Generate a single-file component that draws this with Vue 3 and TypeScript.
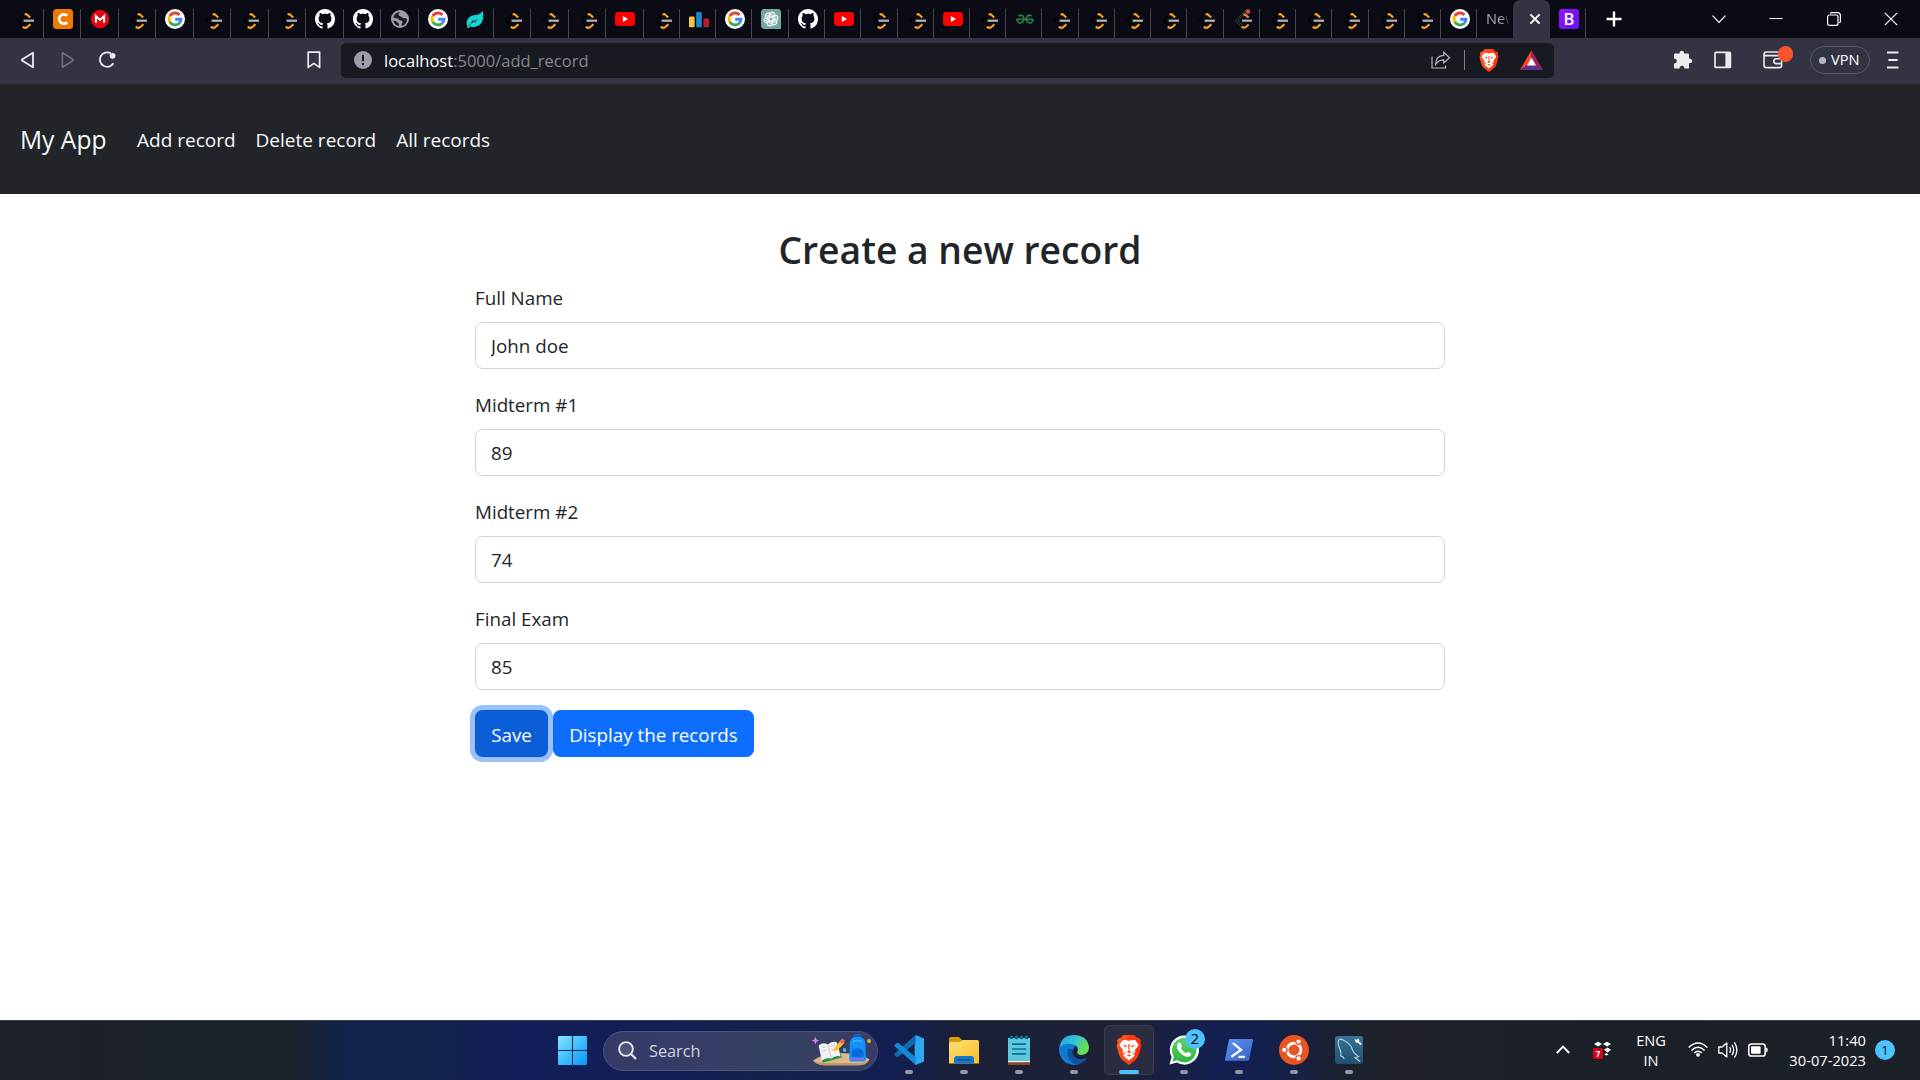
<script setup lang="ts">
import { ref } from 'vue'

interface Tab {
  icon: string
  width: number
}

interface Field {
  id: string
  label: string
  value: string
}

interface TaskApp {
  icon: string
  active?: boolean
  badge?: string
}

const tabIcons: string[] = [
  'lc', 'coursera', 'mega', 'lc', 'google', 'lc', 'lc', 'lc', 'github', 'github', 'globe', 'google', 'leaf',
  'lc', 'lc', 'lc', 'youtube', 'lc', 'bars', 'google', 'gpt', 'github', 'youtube', 'lc', 'lc', 'youtube',
  'lc', 'gfg', 'lc', 'lc', 'lc', 'lc', 'lc', 'lc-dot', 'lc', 'lc', 'lc', 'lc', 'lc', 'google',
]
const tabEdges: number[] = [
  6, 44, 81, 119, 156, 194, 231, 269, 306, 344, 381, 419, 456, 494, 531, 569, 606, 644, 680, 716, 752, 789,
  825, 861, 898, 934, 970, 1006, 1042, 1079, 1115, 1151, 1187, 1224, 1260, 1296, 1332, 1369, 1405, 1441, 1477,
]
const tabs: Tab[] = tabIcons.map((icon, i) => ({ icon, width: tabEdges[i + 1] - tabEdges[i] }))

const navLinks: string[] = ['Add record', 'Delete record', 'All records']

const fields = ref<Field[]>([
  { id: 'name', label: 'Full Name', value: 'John doe' },
  { id: 'mid1', label: 'Midterm #1', value: '89' },
  { id: 'mid2', label: 'Midterm #2', value: '74' },
  { id: 'final', label: 'Final Exam', value: '85' },
])

const apps: TaskApp[] = [
  { icon: 'vscode' },
  { icon: 'folder' },
  { icon: 'notepad' },
  { icon: 'edge' },
  { icon: 'brave', active: true },
  { icon: 'whatsapp', badge: '2' },
  { icon: 'powershell' },
  { icon: 'ubuntu' },
  { icon: 'mysql' },
]
</script>

<template>
  <svg class="defs" width="0" height="0" aria-hidden="true">
    <defs>
      <linearGradient id="g-win" x1="0" y1="0" x2="1" y2="1">
        <stop offset="0" stop-color="#8ae3ff" /><stop offset=".5" stop-color="#3cc0fb" /><stop offset="1" stop-color="#0a95f5" />
      </linearGradient>
      <linearGradient id="g-folder" x1="0" y1="0" x2="1" y2="1">
        <stop offset="0" stop-color="#ffe07a" /><stop offset="1" stop-color="#f8bd25" />
      </linearGradient>
      <linearGradient id="g-edge" x1="0" y1="0" x2="1" y2=".4">
        <stop offset="0" stop-color="#1b9de2" /><stop offset=".55" stop-color="#35c3d8" /><stop offset="1" stop-color="#6be04f" />
      </linearGradient>
      <linearGradient id="g-brave" x1="0" y1="0" x2="1" y2="0">
        <stop offset="0" stop-color="#ff5a1f" /><stop offset="1" stop-color="#ff2a0a" />
      </linearGradient>
      <linearGradient id="g-ps" x1="0" y1="0" x2="1" y2="1">
        <stop offset="0" stop-color="#5a94f5" /><stop offset="1" stop-color="#3a62c4" />
      </linearGradient>
      <linearGradient id="g-wa" x1="0" y1="0" x2="0" y2="1">
        <stop offset="0" stop-color="#5fd267" /><stop offset="1" stop-color="#2bb741" />
      </linearGradient>
      <linearGradient id="g-mysql" x1="0" y1="0" x2="0" y2="1">
        <stop offset="0" stop-color="#37729a" /><stop offset="1" stop-color="#20506e" />
      </linearGradient>
    </defs>

    <symbol id="i-lc" viewBox="0 0 20 20">
      <path d="M11.5 4 L4.6 10.2 Q3.3 11.6 4.6 13 L8.6 17" fill="none" stroke="#040405" stroke-width="1.9" />
      <path d="M9.6 5.7 L11.4 5 L15.2 8.5" fill="none" stroke="#f9a11b" stroke-width="2.2" stroke-linejoin="round" />
      <path d="M7.8 17.6 Q10 19.7 12.2 18.2 L15.4 15.2" fill="none" stroke="#f9a11b" stroke-width="2.2" />
      <path d="M8.6 11.7 H19" stroke="#b8b4b6" stroke-width="2.2" />
    </symbol>
    <symbol id="i-lc-dot" viewBox="0 0 20 20">
      <path d="M13 1 L3.6 10.2 Q2.3 11.8 3.6 13.3 L8.6 18.3" fill="none" stroke="#55524f" stroke-width=".7" />
      <path d="M12 4.4 L5.8 10.8 Q5.2 11.9 6 13 L8.8 16" fill="none" stroke="#55524f" stroke-width=".7" />
      <path d="M10.4 6 L12 5.4 L15.6 8.6" fill="none" stroke="#d99a35" stroke-width="2.1" />
      <path d="M8.6 17.6 Q11 19.3 12.8 18.2 L15.6 15.5" fill="none" stroke="#d99a35" stroke-width="2.1" />
      <path d="M9 11.7 H19" stroke="#b8b4b6" stroke-width="2.1" />
      <circle cx="15" cy="2.6" r="2.4" fill="#e04848" />
    </symbol>
    <symbol id="i-coursera" viewBox="0 0 20 20">
      <rect width="20" height="20" rx="3.5" fill="#ef7a00" />
      <path d="M14.2 6.8 A4.7 4.7 0 1 0 14.2 13.2" fill="none" stroke="#fff" stroke-width="2.8" />
    </symbol>
    <symbol id="i-mega" viewBox="0 0 20 20">
      <circle cx="10" cy="10" r="9.2" fill="#e30613" />
      <path d="M5.9 13.7 V7 L10 10.9 L14.1 7 V13.7" fill="none" stroke="#fff" stroke-width="2" />
    </symbol>
    <symbol id="i-google" viewBox="0 0 20 20">
      <circle cx="10" cy="10" r="10" fill="#fff" />
      <g fill="none" stroke-width="2.9">
        <path d="M4.8 7 A6 6 0 0 1 14.4 5.9" stroke="#ea4335" />
        <path d="M4.9 13.1 A6 6 0 0 1 4.9 6.9" stroke="#fbbc05" />
        <path d="M14.2 14.3 A6 6 0 0 1 4.8 12.9" stroke="#34a853" />
        <path d="M10.2 10.2 H16 A6 6 0 0 1 14 14.4" stroke="#4285f4" />
      </g>
    </symbol>
    <symbol id="i-github" viewBox="0 0 16 16">
      <path fill="#fff" d="M8 0C3.58 0 0 3.58 0 8c0 3.54 2.29 6.53 5.47 7.59.4.07.55-.17.55-.38 0-.19-.01-.82-.01-1.49-2.01.37-2.53-.49-2.69-.94-.09-.23-.48-.94-.82-1.13-.28-.15-.68-.52-.01-.53.63-.01 1.08.58 1.23.82.72 1.21 1.87.87 2.33.66.07-.52.28-.87.51-1.07-1.78-.2-3.64-.89-3.64-3.95 0-.87.31-1.59.82-2.15-.08-.2-.36-1.02.08-2.12 0 0 .67-.21 2.2.82.64-.18 1.32-.27 2-.27s1.36.09 2 .27c1.53-1.04 2.2-.82 2.2-.82.44 1.1.16 1.92.08 2.12.51.56.82 1.27.82 2.15 0 3.07-1.87 3.75-3.65 3.95.29.25.54.73.54 1.48 0 1.07-.01 1.93-.01 2.2 0 .21.15.46.55.38A8.01 8.01 0 0 0 16 8c0-4.42-3.58-8-8-8z" />
    </symbol>
    <symbol id="i-globe" viewBox="0 0 20 20">
      <circle cx="10" cy="10" r="9" fill="#9aa0a6" />
      <path d="M10.2 3 Q7.8 4.6 8.6 6.6 Q9.6 7.6 11.4 7.4 Q12.4 9.6 14.6 9 Q17 9 17 10.6 Q16.6 15.6 12 17 Q11 15.4 12.4 13.8 Q13 11.6 10.6 11.6 Q8.6 11.2 8 9.4 Q5.4 9.6 3.2 8.6 Q4.8 3.4 10.2 3Z M3.2 11.4 Q6.6 11.2 7.2 13.2 Q9.4 13.6 9 17 Q4.4 16.2 3.2 11.4Z" fill="#1c1c27" />
    </symbol>
    <symbol id="i-leaf" viewBox="0 0 20 20">
      <path d="M18 1.8 Q19.2 11 15.6 15 Q11.6 19.4 5.6 17.4 L3 19.2 Q1.6 18.6 2.2 17.6 Q.6 12.4 3.6 8.8 Q6 6.2 11 6 Q15 5.6 18 1.8Z" fill="#15d3d0" />
      <path d="M3.4 17 Q6.4 12.6 12.4 10.6 M7 13.4 L7.6 11 M8.6 12.6 L11 13.2" fill="none" stroke="#0b3a42" stroke-width=".9" />
    </symbol>
    <symbol id="i-youtube" viewBox="0 0 20 20">
      <rect y="3" width="20" height="14" rx="3.4" fill="#f00" />
      <path d="M7.9 7 L13.1 10 L7.9 13Z" fill="#fff" />
    </symbol>
    <symbol id="i-bars" viewBox="0 0 20 20">
      <rect x="0" y="7.6" width="5.6" height="10.6" rx="1" fill="#f3c63f" />
      <rect x="7.2" y="3" width="5.6" height="15.2" rx="1" fill="#1c87c9" />
      <rect x="14.4" y="9.4" width="5.6" height="8.8" rx="1" fill="#b71d29" />
    </symbol>
    <symbol id="i-gpt" viewBox="0 0 20 20">
      <path d="M3.4 0 H16.6 Q20 0 20 3.4 V20 H3.4 Q0 20 0 16.6 V3.4 Q0 0 3.4 0Z" fill="#74a99b" />
      <g fill="none" stroke="#fff" stroke-width="1.1" stroke-linejoin="round">
        <path id="petal" d="M10 8 L13 6.3 Q15.6 5.6 16.7 7.8 Q17.4 9.8 15.8 11.2 M12 8.9 V13.2 L8.4 15.4" />
        <use href="#petal" transform="rotate(60 10 10)" />
        <use href="#petal" transform="rotate(120 10 10)" />
        <use href="#petal" transform="rotate(180 10 10)" />
        <use href="#petal" transform="rotate(240 10 10)" />
        <use href="#petal" transform="rotate(300 10 10)" />
      </g>
    </symbol>
    <symbol id="i-gfg" viewBox="0 0 20 20">
      <path d="M3.4 7.2 Q5.8 5.2 8 7.4 Q9.6 9.8 8 12.6 Q5.6 14.8 3.2 13.2 Q1.9 11.9 2 10.4 H18 Q18.1 11.9 16.8 13.2 Q14.4 14.8 12 12.6 Q10.4 9.8 12 7.4 Q14.2 5.2 16.6 7.2" fill="none" stroke="#2a7a3f" stroke-width="1.7" />
    </symbol>
    <symbol id="i-brave" viewBox="0 0 26 30">
      <path d="M7.5 0 H18.5 L21 2.8 Q24 2.6 25 5.6 L24.4 7.6 L25.4 10.2 Q23.4 19 21.6 22.6 Q20.4 24.8 13 30 Q5.6 24.8 4.4 22.6 Q2.6 19 .6 10.2 L1.6 7.6 L1 5.6 Q2 2.6 5 2.8Z" fill="url(#g-brave)" />
      <path d="M9.6 5 L13 5.8 L16.4 5 L19.4 5.2 L22.4 9.6 Q22.6 11.4 19 14.8 Q20.2 17.6 17 19 L19 20.4 L13 25.4 L7 20.4 L9 19 Q5.8 17.6 7 14.8 Q3.4 11.4 3.6 9.6 L6.6 5.2Z" fill="#fff" />
      <path d="M6.8 9.8 L11 10.8 L10 12.6Z M19.2 9.8 L15 10.8 L16 12.6Z M12.2 9.6 L13 9 L13.8 9.6 L13.4 15.4 L15 17 L13 18.2 L11 17 L12.6 15.4Z M8.6 15.8 L10.2 18 L8.6 17.4Z M17.4 15.8 L15.8 18 L17.4 17.4Z M10.6 20.4 L13 19.5 L15.4 20.4 L13 21.6Z" fill="#ff4416" />
    </symbol>
    <symbol id="i-vscode" viewBox="0 0 30 30">
      <path d="M21.6 0 L30 3.6 V26.4 L21.6 30 L20.6 28 V2Z" fill="#2aa9ee" />
      <path d="M.5 18.6 L21.6 0 V7.8 L4.6 21.8 L2.9 22 L.5 19.9Z" fill="#0b6cb5" />
      <path d="M.5 10 L3 7.9 L4.6 8.1 L21.6 22.2 V30 L.5 11.2Z" fill="#1589d6" />
    </symbol>
    <symbol id="i-folder" viewBox="0 0 30 30">
      <path d="M0 4 Q0 2 2 2 H10 L13 5 H28 V12 H0Z" fill="#dc9a0b" />
      <path d="M0 9 Q0 7 2 7 H11 L14 5 H28.5 Q30 5 30 6.5 V28.5 H0Z" fill="url(#g-folder)" />
      <path d="M5 28.5 V24 Q5 21 8 21 H22 Q25 21 25 24 V28.5Z" fill="#1379cc" />
      <path d="M8.5 24.8 H21.5" stroke="#0a4a86" stroke-width="1.3" />
    </symbol>
    <symbol id="i-notepad" viewBox="0 0 30 30">
      <rect x="4" y="3" width="22" height="24" fill="#5ec6dd" />
      <path d="M4 26 H26 V27.6 H4Z" fill="#f2f2f2" />
      <path d="M4 27.4 H26 V30 H4Z" fill="#8b4b20" />
      <path d="M8 9.2 H22 M8 14 H22 M8 18.8 H22" stroke="#087097" stroke-width="1.7" />
      <g fill="#0c6d90">
        <circle cx="7.5" cy="2.4" r="1.9" /><circle cx="12.5" cy="2.4" r="1.9" /><circle cx="17.5" cy="2.4" r="1.9" /><circle cx="22.5" cy="2.4" r="1.9" />
      </g>
    </symbol>
    <symbol id="i-edge" viewBox="0 0 30 30">
      <path d="M0 15 A15 15 0 0 0 25.6 25.6 Q15 29 12 19 L17 9 Q8 4 0 13Z" fill="#0c7cd5" />
      <path d="M8.8 13.5 Q6.5 26 17.6 29.7 Q24.5 28.8 28.2 22.6 Q20.5 26 15.4 21.8 Q12 17.6 14.6 14.4Z" fill="#11529e" />
      <path d="M.3 13 Q2 0 15 0 Q28.6 .4 30 12.6 Q29.6 20 22 20 Q16.6 19.6 18.8 15.6 Q19.4 10.6 13 9 Q5 7.6 .3 13Z" fill="url(#g-edge)" />
    </symbol>
    <symbol id="i-whatsapp" viewBox="0 0 30 30">
      <path d="M.5 29.5 L2.6 22 A14.6 14.6 0 1 1 8 27.6Z" fill="#fff" />
      <path d="M3.6 26.4 L4.9 21.6 A12.2 12.2 0 1 1 8.4 25.2Z" fill="url(#g-wa)" />
      <path d="M9.4 7.8 Q11 6.8 11.8 8.4 L13 11 Q13.2 12 11.8 13.2 Q13.4 16.6 17 18.2 Q18.4 16.6 19.2 16.8 L22.2 18.4 Q22.8 20.4 20.4 21.6 Q17.6 22.8 13 19.4 Q8.4 15.6 7.8 11.6 Q7.8 9 9.4 7.8Z" fill="#fff" />
    </symbol>
    <symbol id="i-powershell" viewBox="0 0 30 30">
      <path d="M6 4 H28 Q29.2 4 29 5.2 L25.2 24.6 Q25 25.8 23.6 25.8 H2 Q.8 25.8 1 24.6 L4.8 5.2 Q5 4 6 4Z" fill="url(#g-ps)" />
      <path d="M9 8 L17 15 L7.4 21.8 M14.4 21.8 H21" fill="none" stroke="#fff" stroke-width="2.3" />
    </symbol>
    <symbol id="i-ubuntu" viewBox="0 0 30 30">
      <circle cx="15" cy="15" r="15" fill="#e95420" />
      <circle cx="15" cy="15" r="6.9" fill="none" stroke="#fff" stroke-width="2.9" />
      <g stroke="#e95420" stroke-width="1.3" fill="#fff">
        <circle cx="5.4" cy="15" r="2.8" /><circle cx="19.6" cy="6.6" r="2.8" /><circle cx="19.6" cy="23.4" r="2.8" />
      </g>
    </symbol>
    <symbol id="i-mysql" viewBox="0 0 30 30">
      <rect x="1" y="1" width="28" height="28" rx="2.5" fill="url(#g-mysql)" />
      <path d="M6.4 21 Q7.6 19 6.2 15 Q3.4 8.6 4.6 5.4 Q5.6 3 9.2 5 Q14.8 7.4 17.6 12.6 Q19 18 24.6 21.6 L20.8 22.8 Q24 24.8 26 26.6 M6.4 21 Q9 20.6 10.2 24" fill="none" stroke="#bcd3df" stroke-width="1.1" />
      <path d="M20.6 3.4 L22.4 5 L24.2 3.2 Q26 5.4 25.2 6.4 L28 9 L26.6 10.2 L23.8 7.8 Q21 8 20.6 3.4Z" fill="#f2f6f8" />
    </symbol>
  </svg>

  <div class="desktop">
    <!-- Browser tab strip -->
    <div class="tabstrip">
      <div v-for="(tab, i) in tabs" :key="i" class="tab" :style="{ width: tab.width + 'px' }">
        <svg class="favicon"><use :href="'#i-' + tab.icon" /></svg>
      </div>
      <div class="tab-new"><span>New</span></div>
      <div class="tab-active">
        <svg width="12" height="12" viewBox="0 0 12 12"><path d="M1.4 1.4 L10.6 10.6 M10.6 1.4 L1.4 10.6" stroke="#fff" stroke-width="2" /></svg>
      </div>
      <div class="tab tab-last"><span class="boot">B</span></div>
      <svg class="plus" width="16" height="16" viewBox="0 0 16 16"><path d="M8 .5 V15.5 M.5 8 H15.5" stroke="#fff" stroke-width="2.4" /></svg>
      <div class="window-buttons">
        <svg width="14" height="14" viewBox="0 0 14 14"><path d="M.6 3.6 L7 10.4 L13.4 3.6" /></svg>
        <svg width="14" height="14" viewBox="0 0 14 14"><path d="M.5 6.5 H13.5" stroke-width="1.1" /></svg>
        <svg width="14" height="14" viewBox="0 0 14 14"><rect x=".6" y="3" width="10.4" height="10.4" rx="2" /><path d="M3.2 1.6 Q3.8 .6 5 .6 H10.4 Q13.4 .6 13.4 3.6 V9 Q13.4 10.4 12.4 11" /></svg>
        <svg width="14" height="14" viewBox="0 0 14 14"><path d="M.8 .8 L13.2 13.2 M13.2 .8 L.8 13.2" /></svg>
      </div>
    </div>

    <!-- Address toolbar -->
    <div class="toolbar">
      <svg class="back" width="14" height="18" viewBox="0 0 14 18"><path d="M12 1.8 V16.2 L1.4 9.8 Q.6 9 1.4 8.2Z" fill="none" stroke="#ececf0" stroke-width="1.8" stroke-linejoin="round" /></svg>
      <svg class="forward" width="14" height="18" viewBox="0 0 14 18"><path d="M1.4 1.8 V16.2 L11.8 9.8 Q12.6 9 11.8 8.2Z" fill="none" stroke="#6d6f7c" stroke-width="1.6" stroke-linejoin="round" /></svg>
      <svg class="reload" width="18" height="18" viewBox="0 0 18 18"><path d="M12.8 2.4 A7.2 7.2 0 1 0 15.4 12.2" fill="none" stroke="#ececf0" stroke-width="1.8" /><circle cx="14.6" cy="4.8" r="2.9" fill="#ececf0" /></svg>
      <svg class="bookmark" width="14" height="18" viewBox="0 0 14 18"><path d="M1.2 1.2 H12.6 V16.4 L6.9 12.4 L1.2 16.4Z" fill="none" stroke="#ececf0" stroke-width="1.7" stroke-linejoin="round" /></svg>
      <div class="address">
        <svg width="18" height="18" viewBox="0 0 18 18"><circle cx="9" cy="9" r="9" fill="#9a9da8" /><path d="M9 3.8 V10.2 M9 12 V14.2" stroke="#17191f" stroke-width="2" /></svg>
        <span class="url"><b>localhost</b>:5000/add_record</span>
        <svg class="share" width="20" height="18" viewBox="0 0 20 18"><path d="M1 5.6 V17 H14.6 V14.4 M4.6 13.4 Q4.8 4.8 12.8 4.4 V1.2 L18.6 6.8 L12.8 12 V8.8 Q7.4 8.8 4.6 13.4Z" fill="none" stroke="#b3b4b8" stroke-width="1.2" /></svg>
        <i class="divider"></i>
        <svg class="brave" width="20" height="23"><use href="#i-brave" /></svg>
        <svg class="bat" width="23" height="20" viewBox="0 0 23 20"><path d="M11.5 0 L0 20 L7.4 15 L11.5 8Z" fill="#ff4724" /><path d="M11.5 0 L23 20 L15.6 15 L11.5 8Z" fill="#9e1f63" /><path d="M0 20 H23 L15.6 15 H7.4Z" fill="#662d91" /><path d="M11.5 7.6 L7 15.4 H16Z" fill="#fff" /></svg>
      </div>
      <svg class="puzzle" width="20" height="20" viewBox="0 0 20 20"><path d="M6.6 3.4 Q6.6 .8 9 .8 Q11.2 .8 11.2 3.4 H14.8 Q16 3.4 16 4.6 V8.4 Q19.2 8.6 19.2 11 Q19.2 13.2 16 13.2 V17.4 Q16 18.6 14.8 18.6 H11.4 Q11.4 15.8 9 15.8 Q6.6 15.8 6.6 18.6 H2.2 Q1 18.6 1 17.4 V13.4 Q3.8 13.2 3.8 11 Q3.8 8.8 1 8.6 V4.6 Q1 3.4 2.2 3.4Z" fill="#ececec" /></svg>
      <svg class="sidebar" width="18" height="18" viewBox="0 0 18 18"><rect x="1" y="1.4" width="15.4" height="15" rx="1" fill="none" stroke="#ececec" stroke-width="1.7" /><path d="M11.4 1.4 H16.4 V16.4 H11.4Z" fill="#ececec" /></svg>
      <div class="wallet">
        <svg width="21" height="20" viewBox="0 0 21 20"><g fill="none" stroke="#ececec" stroke-width="1.6"><rect x="1" y="2" width="17.6" height="15.6" rx="2.4" /><path d="M1 5.6 H18.6 M19 8.8 H13.4 Q10.8 9 10.8 11.2 Q10.8 13.4 13.4 13.6 H19" /></g></svg>
        <i></i>
      </div>
      <div class="vpn"><i></i><span>VPN</span></div>
      <svg class="menu" width="12" height="18" viewBox="0 0 12 18"><path d="M0 1.5 H11.4 M1.4 9 H10.6 M0 16.5 H11.4" stroke="#ececec" stroke-width="1.9" /></svg>
    </div>

    <!-- Site navigation -->
    <nav class="navbar">
      <a class="brand">My App</a>
      <a v-for="link in navLinks" :key="link" class="nav-link">{{ link }}</a>
    </nav>

    <!-- Record form -->
    <main class="page">
      <form class="form" @submit.prevent>
        <h1>Create a new record</h1>
        <div v-for="field in fields" :key="field.id" class="field">
          <label :for="field.id">{{ field.label }}</label>
          <input :id="field.id" v-model="field.value" type="text" autocomplete="off" spellcheck="false" />
        </div>
        <div class="actions">
          <button type="submit" class="btn save">Save</button>
          <button type="button" class="btn display">Display the records</button>
        </div>
      </form>
    </main>

    <!-- Taskbar -->
    <footer class="taskbar">
      <svg class="start" width="29" height="29" viewBox="0 0 29 29"><path d="M1 0 H14 V14 H0 V1 Q0 0 1 0Z M15 0 H28 Q29 0 29 1 V14 H15Z M0 15 H14 V29 H1 Q0 29 0 28Z M15 15 H29 V28 Q29 29 28 29 H15Z" fill="url(#g-win)" /></svg>
      <div class="search">
        <svg width="19" height="19" viewBox="0 0 19 19"><circle cx="8" cy="8" r="6.9" fill="#4c5479" stroke="#e6e8ef" stroke-width="1.9" /><path d="M12.8 12.8 L18 18" stroke="#e6e8ef" stroke-width="2.2" /></svg>
        <span>Search</span>
        <svg class="highlight" width="60" height="34" viewBox="0 0 60 34">
          <path d="M1 26.5 Q12 18.6 28 19 Q48 19 57.6 25.4 Q54 32 44 31.2 H12 Q4 30.6 1 26.5Z" fill="#dfb98a" />
          <path d="M1 26.5 Q6 29 14 29 H45 Q54 29 57.6 25.4 Q54 32 44 31.2 H12 Q4 30.6 1 26.5Z" fill="#c49967" />
          <path d="M8 12 L25 9.6 L30 23.6 L10.6 28.8Z" fill="#29924d" />
          <path d="M6.6 11.4 Q11 7.6 15.8 10.4 Q20 6.6 25 8.4 L28.6 22.4 Q23 21 19.4 24.6 Q15 22.6 9.8 26.6Z" fill="#f3f0f2" />
          <path d="M15.8 10.4 L19.4 24.4 M9.4 13.6 L14 12.8 M10.4 17 L15 16.2 M18.6 12.6 L23.4 11 M19.6 16 L24.2 14.6" stroke="#cbc2cd" stroke-width=".8" />
          <path d="M22 14.8 L29 6 L32.6 8.8 L25.4 16.4 L21.6 17.4Z" fill="#ffbd36" />
          <path d="M27.4 7.6 L30.4 4.6 L33 6.8 L30.6 10.2Z" fill="#ef6359" />
          <path d="M3.4 2.6 L4.5 5.4 L7.4 6.5 L4.5 7.7 L3.4 10.4 L2.3 7.7 L-.4 6.5 L2.3 5.4Z" fill="#d77bf0" />
          <path d="M37.8 10 Q38 2.8 45.4 2.6 Q53.2 2.8 53.4 10 L54 24.6 Q54 27.6 50.8 27.6 H40.6 Q37 27.6 37.2 24.4Z" fill="#1391f8" />
          <path d="M42 3 Q42 .4 45.4 .4 Q49 .4 49 3" fill="none" stroke="#0869ce" stroke-width="1.5" />
          <path d="M39.6 23 V19 Q40 14.8 45.6 14.6 Q51.4 14.8 51.6 19 V23Z" fill="#0b68df" /><path d="M39.4 25 H51.8" stroke="#9b65ef" stroke-width="1.8" />
          <path d="M41 7.8 Q45 5.2 50 7.8" fill="none" stroke="#48b0ff" stroke-width="1.3" />
          <circle cx="32.6" cy="16" r="1.9" fill="#4ab9d7" /><circle cx="57" cy="7" r="1.9" fill="#f2b01e" />
        </svg>
      </div>
      <div class="apps">
        <div v-for="app in apps" :key="app.icon" class="app" :class="{ active: app.active }">
          <svg width="30" height="30"><use :href="'#i-' + app.icon" /></svg>
          <span v-if="app.badge" class="app-badge">{{ app.badge }}</span>
          <i></i>
        </div>
      </div>
      <div class="tray">
        <svg class="chev" width="14" height="9" viewBox="0 0 14 9"><path d="M.8 8 L7 1.6 L13.2 8" fill="none" stroke="#fff" stroke-width="1.9" /></svg>
        <div class="dropbox">
          <svg width="18" height="16" viewBox="0 0 18 16"><path d="M1 3 L5 .8 L9 3 L5 5.4Z M10 3 L14 .8 L18 3 L14 5.4Z M11 8.8 L14.6 6.4 L18 8.8 L14.6 11.4Z M11.2 13.4 L13.6 12 L15.4 13.4 L13.4 14.6Z" fill="#fff" /></svg>
          <b>7</b>
        </div>
        <div class="lang"><span>ENG</span><span>IN</span></div>
        <svg class="wifi" width="20" height="15" viewBox="0 0 20 15"><g fill="none" stroke="#fff" stroke-width="1.4"><path d="M.6 5.6 Q10 -3.4 19.4 5.6 M3.4 8.4 Q10 2.2 16.6 8.4 M6.2 11 Q10 7.4 13.8 11" /></g><circle cx="10" cy="12.8" r="1.9" fill="#fff" /></svg>
        <svg class="volume" width="20" height="18" viewBox="0 0 20 18"><g fill="none" stroke="#fff" stroke-width="1.3" stroke-linejoin="round"><path d="M.8 6 H4 L8.8 2 V16 L4 12 H.8Z M11.6 6.2 Q13.6 9 11.6 11.8 M14 3.8 Q17.4 9 14 14.2 M16.4 1.4 Q21.4 9 16.4 16.6" /></g></svg>
        <svg class="battery" width="20" height="14" viewBox="0 0 20 14"><rect x=".8" y="1" width="16.4" height="12" rx="2.6" fill="none" stroke="#fff" stroke-width="1.5" /><rect x="3" y="3.2" width="9.6" height="7.6" rx="1" fill="#fff" /><path d="M18.2 4.6 Q19.8 5 19.8 7 Q19.8 9 18.2 9.4Z" fill="#fff" /></svg>
        <div class="clock"><span>11:40</span><span>30-07-2023</span></div>
        <span class="notify">1</span>
      </div>
    </footer>
  </div>
</template>

<style>
body {
  margin: 0;
  overflow: hidden;
}
</style>

<style scoped>
.defs {
  position: absolute;
}
.desktop {
  width: 1920px;
  height: 1080px;
  display: flex;
  flex-direction: column;
  overflow: hidden;
  background: #fff;
  font-family: 'Open Sans', 'Noto Sans', sans-serif;
  color: #212529;
}
.desktop * {
  box-sizing: border-box;
}
svg {
  display: block;
  flex: none;
}

/* Tab strip */
.tabstrip {
  height: 38px;
  flex: none;
  display: flex;
  align-items: flex-end;
  padding-left: 6px;
  background: #0b0b15;
}
.tab {
  flex: none;
  height: 29px;
  border-right: 1px solid #47474b;
  padding-left: 9px;
}
.favicon {
  width: 20px;
  height: 20px;
}
.tab-new {
  width: 36px;
  height: 29px;
  padding-left: 9px;
  overflow: hidden;
  font-size: 14.6px;
  line-height: 19px;
  flex: none;
}
.tab-new span {
  display: block;
  width: 23px;
  overflow: hidden;
  background: linear-gradient(90deg, #b4b4ba 60%, rgba(160, 160, 166, 0.15));
  -webkit-background-clip: text;
  background-clip: text;
  color: transparent;
}
.tab-active {
  width: 37px;
  height: 38px;
  flex: none;
  border-radius: 7px 7px 0 0;
  background: #323443;
  display: flex;
  align-items: center;
  padding-left: 16px;
}
.tab-last {
  width: 36px;
}
.boot {
  display: block;
  width: 20px;
  height: 20px;
  border-radius: 3px;
  background: linear-gradient(135deg, #9013fe, #6610f2);
  color: #fff;
  font-size: 16.5px;
  font-weight: 600;
  line-height: 20px;
  text-align: center;
}
.plus {
  margin: 0 0 11px 20px;
}
.window-buttons {
  display: flex;
  gap: 43.3px;
  margin: 0 22px 12px auto;
}
.window-buttons svg {
  fill: none;
  stroke: #fff;
  stroke-width: 1.2;
}

/* Toolbar */
.toolbar {
  height: 46px;
  flex: none;
  display: flex;
  align-items: center;
  padding: 0 22px 2px 21px;
  background: #323443;
}
.forward {
  margin-left: 26px;
}
.reload {
  margin-left: 23px;
}
.bookmark {
  margin-left: 191px;
}
.address {
  width: 1213px;
  height: 35px;
  margin-left: 20px;
  padding: 0 11px 0 13px;
  border-radius: 5px;
  background: #171a21;
  display: flex;
  align-items: center;
  flex: none;
}
.url {
  margin-left: 12px;
  padding-top: 1px;
  font-size: 16.5px;
  line-height: 24px;
  color: #85878c;
  white-space: nowrap;
}
.url b {
  font-weight: 400;
  color: #fff;
}
.share {
  margin-left: auto;
}
.divider {
  width: 1px;
  height: 20px;
  margin: 0 14px 0 13px;
  background: #7c7e84;
}
.bat {
  margin-left: 21px;
}
.puzzle {
  margin-left: 119px;
}
.sidebar {
  margin-left: 21px;
}
.wallet {
  position: relative;
  margin-left: 31px;
}
.wallet i {
  position: absolute;
  left: 15px;
  top: -4px;
  width: 15px;
  height: 16px;
  border-radius: 8px;
  background: #fb542b;
}
.vpn {
  width: 60px;
  height: 28px;
  margin-left: 26px;
  border: 1px solid #55576a;
  border-radius: 14px;
  display: flex;
  align-items: center;
  padding-left: 8px;
  gap: 5px;
  color: #fff;
  font-size: 14.6px;
  line-height: 20px;
  flex: none;
}
.vpn span {
  margin-top: -2px;
}
.vpn i {
  width: 7px;
  height: 7px;
  border-radius: 50%;
  background: #b3b5c9;
}
.menu {
  margin-left: 17px;
}

/* Navbar */
.navbar {
  height: 110px;
  flex: none;
  display: flex;
  align-items: center;
  padding: 1px 0 0 20px;
  background: #212529;
  color: #f8f9fa;
}
.brand {
  width: 97px;
  margin-right: 20px;
  font-size: 24.6px;
  line-height: 38px;
}
.nav-link {
  margin-right: 20px;
  font-size: 19px;
  line-height: 30px;
}

/* Form */
.page {
  flex: 1;
  display: flex;
  justify-content: center;
  padding-top: 32px;
}
.form {
  width: 970px;
}
h1 {
  margin: 0 0 9px;
  text-align: center;
  font-size: 37.25px;
  font-weight: 600;
  line-height: 48px;
}
.field {
  height: 107px;
  display: flex;
  flex-direction: column;
  align-items: flex-start;
}
label {
  margin-bottom: 9px;
  font-size: 18.8px;
  line-height: 30px;
}
input {
  width: 100%;
  height: 47px;
  padding: 1px 15px 0;
  border: 1px solid #ced4da;
  border-radius: 7.5px;
  outline: none;
  background: #fff;
  color: #212529;
  font: 18.8px/30px 'Open Sans', 'Noto Sans', sans-serif;
}
.actions {
  display: flex;
  gap: 5px;
  margin-top: -1px;
}
.btn {
  height: 47px;
  padding: 2px 0 0;
  border: 1px solid #0d6efd;
  border-radius: 7.5px;
  background: #0d6efd;
  color: #fff;
  font: 18.8px/30px 'Open Sans', 'Noto Sans', sans-serif;
}
.save {
  width: 73px;
  border-color: #0a58ca;
  background: #0b5ed7;
  box-shadow: 0 0 0 5px rgba(49, 132, 253, 0.5);
}
.display {
  width: 201px;
}

/* Taskbar */
.taskbar {
  height: 60px;
  flex: none;
  display: flex;
  align-items: center;
  padding-left: 558px;
  border-top: 1px solid #3a424c;
  background: linear-gradient(90deg, #1d2128 0, #1b222c 290px, #12244c 345px, #12244e 430px, #131f58 500px, #131e57 660px, #13234d 760px, #131f52 890px, #1b2037 960px, #1e2136 1130px, #131f50 1215px, #13204e 1260px, #1b2130 1340px, #1e2129 1400px, #1b2028 1600px, #1c2127 1920px);
  color: #fff;
}
.search {
  width: 275px;
  height: 40px;
  margin-left: 16px;
  padding: 0 5px 0 14px;
  border: 1px solid #4b5278;
  border-radius: 20px;
  background: linear-gradient(90deg, #353a68, #363d66 40%, #33415f 60%, #373d68);
  display: flex;
  align-items: center;
  color: #d2d5df;
  flex: none;
}
.search span {
  margin-left: 12px;
  font-size: 16.3px;
}
.highlight {
  margin-left: auto;
  overflow: visible;
}
.apps {
  display: flex;
  gap: 5px;
  margin: -1px 0 0 6px;
}
.app {
  position: relative;
  width: 50px;
  height: 50px;
  padding: 9px 9px 0;
  border: 1px solid transparent;
  border-radius: 5px;
}
.app i {
  position: absolute;
  left: 20px;
  bottom: 0;
  width: 8px;
  height: 4px;
  border-radius: 2px;
  background: #9296a5;
}
.app.active {
  border-color: #3b3e50;
  background: #2a2c40;
}
.app.active i {
  left: 14px;
  width: 20px;
  background: #4cc2ff;
}
.app-badge {
  position: absolute;
  left: 25px;
  top: 3px;
  width: 20px;
  height: 20px;
  border-radius: 50%;
  background: #4cc2ff;
  color: #000;
  font-size: 14.5px;
  line-height: 20px;
  text-align: center;
}
.tray {
  margin: -2px 0 0 auto;
  padding-right: 25px;
  display: flex;
  align-items: center;
}
.dropbox {
  position: relative;
  width: 18px;
  height: 18px;
  margin-left: 23px;
}
.dropbox b {
  position: absolute;
  left: 0;
  top: 7px;
  width: 10px;
  height: 11px;
  border-radius: 2px;
  background: #d9001b;
  font-size: 8px;
  line-height: 11px;
  text-align: center;
}
.lang,
.clock {
  display: flex;
  flex-direction: column;
  font-size: 14.6px;
  line-height: 20px;
}
.lang {
  width: 30px;
  margin-left: 25px;
  align-items: center;
}
.wifi {
  margin-left: 22px;
}
.volume {
  margin-left: 10px;
}
.battery {
  margin-left: 10px;
}
.clock {
  width: 78px;
  margin-left: 20px;
  align-items: flex-end;
  font-size: 14.7px;
  white-space: nowrap;
}
.notify {
  width: 20px;
  height: 20px;
  margin-left: 9px;
  border-radius: 50%;
  background: #4cc2ff;
  color: #10202c;
  font-size: 13px;
  line-height: 20px;
  text-align: center;
}
</style>
